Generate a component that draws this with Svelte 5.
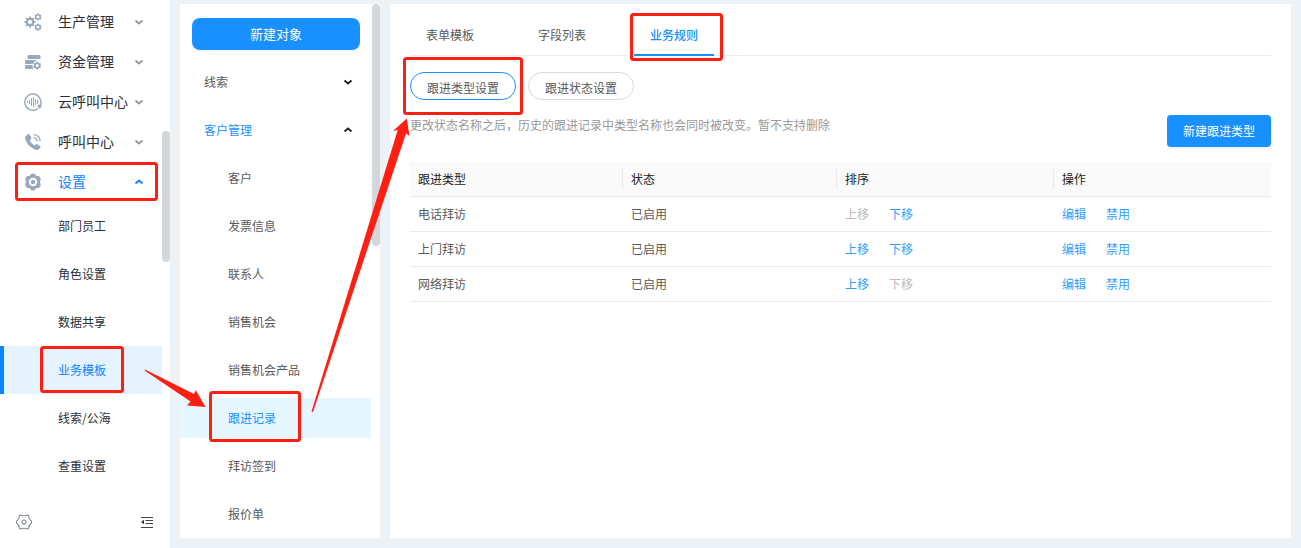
<script lang="ts">
  const mainMenu = [
    { name: '生产管理', icon: 'gears' },
    { name: '资金管理', icon: 'fund' },
    { name: '云呼叫中心', icon: 'cloud' },
    { name: '呼叫中心', icon: 'phone' },
    { name: '设置', icon: 'setting' },
  ];
  const settingMenu = ['部门员工', '角色设置', '数据共享', '业务模板', '线索/公海', '查重设置'];
  const objects = ['客户', '发票信息', '联系人', '销售机会', '销售机会产品', '跟进记录', '拜访签到', '报价单'];
  const tabs = ['表单模板', '字段列表', '业务规则'];
  const ruleTypes = ['跟进类型设置', '跟进状态设置'];

  let openMenu = $state('设置');
  let activeSetting = $state('业务模板');
  let activeObject = $state('跟进记录');
  let activeTab = $state('业务规则');
  let activeRule = $state('跟进类型设置');
  let rows = $state(['电话拜访', '上门拜访', '网络拜访']);

  function move(index: number, step: number) {
    const next = [...rows];
    [next[index], next[index + step]] = [next[index + step], next[index]];
    rows = next;
  }

  // closed gear outline, drawn round (cx, cy)
  function gear(cx: number, cy: number, r: number, teeth: number, depth: number) {
    const points: string[] = [];
    const step = (Math.PI * 2) / teeth;
    for (let i = 0; i < teeth; i++) {
      for (const [offset, radius] of [[-0.3, r - depth], [-0.2, r], [0.2, r], [0.3, r - depth]]) {
        const a = (i + offset) * step - Math.PI / 2;
        points.push(`${(cx + Math.cos(a) * radius).toFixed(2)} ${(cy + Math.sin(a) * radius).toFixed(2)}`);
      }
    }
    return `M${points.join('L')}Z`;
  }

  function ring(cx: number, cy: number, r: number) {
    return `M${cx - r} ${cy}a${r} ${r} 0 1 0 ${r * 2} 0a${r} ${r} 0 1 0 ${-r * 2} 0Z`;
  }
</script>

{#snippet chevron(up: boolean, bold: boolean)}
  <svg class="chevron" class:bold viewBox="0 0 10 10" width="10" height="10">
    <path d={up ? 'M1.5 6.5L5 3.5L8.5 6.5' : 'M1.5 3.5L5 6.5L8.5 3.5'} />
  </svg>
{/snippet}

{#snippet menuIcon(icon: string)}
  <svg class="menu-icon" viewBox="0 0 18 18" width="18" height="18" fill-rule="evenodd">
    {#if icon === 'gears'}
      <path d={gear(6, 9, 5.6, 8, 1.3) + ring(6, 9, 2.1)} />
      <path d={gear(14, 4, 3.6, 6, 0.6) + ring(14, 4, 1.4)} />
      <path d={gear(14, 14.2, 3.6, 6, 0.6) + ring(14, 14.2, 1.4)} />
    {:else if icon === 'fund'}
      <path d="M4.5 2h11a1 1 0 0 1 1 1v2a1 1 0 0 1-1 1h-11a1 1 0 0 1-1-1V3a1 1 0 0 1 1-1z" />
      <path d="M2 7h11.5Q10 8.2 9 11H2a1 1 0 0 1-1-1V8a1 1 0 0 1 1-1z" />
      <path d="M2 12h6.5q0 2.5 1 4H2a1 1 0 0 1-1-1v-2a1 1 0 0 1 1-1z" />
      <path d={gear(13.2, 12.6, 4, 6, 0.7) + ring(13.2, 12.6, 1.5)} />
    {:else if icon === 'cloud'}
      <path class="line" d="M13.8 15.6A8.1 8.1 0 1 1 16.6 11.6" />
      <path d="M14.2 11.8L17.4 11V14.2L15.2 15.4L13.6 13.8Z" />
      <path class="bars" d="M3.5 8v2M5.5 7v4M7.5 5v8M9.5 4v10M11.5 6v6M13.5 7v4" />
    {:else if icon === 'phone'}
      <path d="M2.2 2.5L4 1.2Q5 .8 5.7 1.8L7.3 4.5Q7.7 5.4 7 6.1L5.7 7.4Q7.4 10.8 10.5 12.5L12 11.3Q12.7 10.8 13.5 11.3L16 13Q17 13.8 16.3 14.8L15 16.3Q13.8 17.3 11.8 16.7C6.5 15 2.6 10.8 1.1 5.8Q.7 3.8 2.2 2.5Z" />
      <path class="line" d="M9.5 1.6Q15.8 2 16.2 8.3M9.5 4.6Q12.9 4.9 13.2 8.3" />
    {:else}
      <path d={'M7 1Q9 0 11 1L12.4 2.9L14.8 3Q16.6 4.2 16.8 6.4L15.9 9L16.8 11.6Q16.6 13.8 14.8 15L12.4 15.1L11 17Q9 18 7 17L5.6 15.1L3.2 15Q1.4 13.8 1.2 11.6L2.1 9L1.2 6.4Q1.4 4.2 3.2 3L5.6 2.9Z' + ring(9, 9, 4.2)} />
      <circle cx="9" cy="9" r="2.2" />
    {/if}
  </svg>
{/snippet}

<div class="layout">
  <aside class="sidebar">
    <nav class="main-menu">
      {#each mainMenu as item}
        <button
          class="menu-item"
          class:open={openMenu === item.name}
          onclick={() => (openMenu = item.name)}
        >
          {@render menuIcon(item.icon)}
          <span class="menu-name">{item.name}</span>
          {@render chevron(openMenu === item.name, false)}
        </button>
      {/each}
      {#each settingMenu as name}
        <button class="sub-item" class:active={activeSetting === name} onclick={() => (activeSetting = name)}>
          {name}
        </button>
      {/each}
    </nav>
    <div class="sidebar-footer">
      <button class="icon-button" aria-label="系统设置">
        <svg viewBox="0 0 16 16" width="16" height="16" fill="none" stroke="#858e99" stroke-width="1.1">
          <path d="M4.6 1Q8 2.6 11.4 1L12.6 1.7Q12.8 5.4 15.5 7.2V8.8Q12.8 10.6 12.6 14.3L11.4 15Q8 13.4 4.6 15L3.4 14.3Q3.2 10.6.5 8.8V7.2Q3.2 5.4 3.4 1.7Z" />
          <circle cx="8" cy="8" r="2" />
        </svg>
      </button>
      <button class="icon-button" aria-label="收起菜单">
        <svg viewBox="0 0 14 14" width="14" height="14">
          <path d="M1 2.5h12M5.5 5.5H13M5.5 8.5H13M1 12.5h12" stroke="#444" stroke-width="1.2" />
          <path d="M1 7L4 4.8V9.2Z" fill="#333" />
        </svg>
      </button>
    </div>
    <div class="scroll-thumb sidebar-thumb"></div>
  </aside>

  <section class="object-panel">
    <button class="create-object">新建对象</button>
    <nav class="object-list">
      <button class="group">线索 {@render chevron(false, true)}</button>
      <button class="group open">客户管理 {@render chevron(true, true)}</button>
      {#each objects as name}
        <button class="object" class:active={activeObject === name} onclick={() => (activeObject = name)}>
          {name}
        </button>
      {/each}
    </nav>
    <div class="scroll-thumb object-thumb"></div>
  </section>

  <main class="content">
    <div class="tabs" role="tablist">
      {#each tabs as tab}
        <button
          class="tab"
          role="tab"
          aria-selected={activeTab === tab}
          class:active={activeTab === tab}
          onclick={() => (activeTab = tab)}
        >{tab}</button>
      {/each}
    </div>

    <div class="rule-types">
      {#each ruleTypes as rule}
        <button class="pill" class:active={activeRule === rule} onclick={() => (activeRule = rule)}>{rule}</button>
      {/each}
    </div>

    <div class="toolbar">
      <p class="hint">更改状态名称之后，历史的跟进记录中类型名称也会同时被改变。暂不支持删除</p>
      <button class="create-type">新建跟进类型</button>
    </div>

    <table>
      <thead>
        <tr>
          <th>跟进类型</th>
          <th>状态</th>
          <th>排序</th>
          <th>操作</th>
        </tr>
      </thead>
      <tbody>
        {#each rows as row, i}
          <tr>
            <td>{row}</td>
            <td>已启用</td>
            <td>
              <div class="actions">
                <button class="link" disabled={i === 0} onclick={() => move(i, -1)}>上移</button>
                <button class="link" disabled={i === rows.length - 1} onclick={() => move(i, 1)}>下移</button>
              </div>
            </td>
            <td>
              <div class="actions">
                <button class="link">编辑</button>
                <button class="link">禁用</button>
              </div>
            </td>
          </tr>
        {/each}
      </tbody>
    </table>
  </main>

  <!-- guide marks: 设置 > 业务模板 > 跟进记录 > 跟进类型设置 -->
  <svg class="guide" viewBox="0 0 1301 548" width="1301" height="548" aria-hidden="true">
    <g fill="none" stroke="#ff1f12" stroke-width="3">
      <rect x="16.5" y="163.5" width="140" height="36" rx="2" />
      <rect x="41.5" y="347.5" width="81" height="44" rx="2" />
      <rect x="210.5" y="392.5" width="89" height="48" rx="2" />
      <rect x="404.5" y="58.5" width="117" height="55" rx="2" />
      <rect x="631.5" y="14.5" width="90" height="45" rx="2" />
    </g>
    <g fill="#ff1f12">
      <path d="M145 369.5L194 394L195.7 390L205.5 407L187 405.5L190.5 401.5L144.6 370.5Z" />
      <path d="M311.5 411.5L397.7 130L393 131L406.8 118.5L409.5 136L406 133.5L313 412Z" />
    </g>
  </svg>
</div>

<style>
:global(body) {
  margin: 0;
  background: #edf2f6;
}

.layout {
  position: relative;
  display: flex;
  gap: 10px;
  height: 100vh;
  overflow: hidden;
  font-family: "Noto Sans CJK SC", sans-serif;
  font-size: 12px;
  line-height: 20px;
  color: #5a5a5a;
}

button {
  margin: 0;
  padding: 0;
  border: none;
  background: none;
  font: inherit;
  color: inherit;
  cursor: pointer;
}

.sidebar {
  position: relative;
  display: flex;
  flex-direction: column;
  flex: 0 0 170px;
  background: #fff;
  color: #2b2f36;
}

.main-menu {
  display: flex;
  flex-direction: column;
  flex: 1;
  min-height: 0;
  padding-top: 2px;
  margin-right: 8px;
  overflow: hidden;
}

.menu-item {
  display: flex;
  align-items: center;
  flex: 0 0 40px;
  padding: 0 18px 0 24px;
  font-size: 14px;
  text-align: left;
  white-space: nowrap;
}

.menu-icon {
  flex: none;
  margin-right: 16px;
  fill: #98a9bd;
}

.menu-icon .line {
  fill: none;
  stroke: #98a9bd;
  stroke-width: 1.4;
}

.menu-icon .bars {
  fill: none;
  stroke: #98a9bd;
  stroke-width: 1;
}

.menu-name {
  flex: 1;
  padding-bottom: 2px;
}

.chevron {
  flex: none;
  fill: none;
  stroke: #919ba6;
  stroke-width: 1.8;
}

.chevron.bold {
  stroke: #222;
  stroke-width: 2;
}

.menu-item.open {
  color: #0a84ff;
}

.menu-item.open .chevron {
  stroke: #0a84ff;
  stroke-width: 2;
}

.sub-item {
  flex: 0 0 48px;
  padding-left: 54px;
  border-left: 4px solid transparent;
  text-align: left;
}

.sub-item.active {
  border-left-color: #0a84ff;
  background: #e5f2ff;
  color: #0a84ff;
}

.sidebar-footer {
  display: flex;
  align-items: center;
  justify-content: space-between;
  flex: 0 0 52px;
  padding: 0 16px;
}

.icon-button {
  display: flex;
}

.scroll-thumb {
  position: absolute;
  right: 0;
  width: 8px;
  border-radius: 4px;
  background: #d3d7da;
}

.sidebar-thumb {
  top: 131px;
  height: 131px;
}

.object-thumb {
  top: 0;
  height: 242px;
}

.object-panel {
  position: relative;
  display: flex;
  flex-direction: column;
  flex: 0 0 200px;
  margin: 4px 0 10px;
  background: #fff;
  overflow: hidden;
}

.create-object {
  flex: 0 0 32px;
  margin: 14px 20px 12px 12px;
  border-radius: 8px;
  background: #1890ff;
  box-shadow: 0 2px 0 rgba(0, 0, 0, 0.04);
  color: #fff;
  font-size: 13px;
}

.object-list {
  display: flex;
  flex-direction: column;
  gap: 8px;
  margin-right: 9px;
}

.group {
  display: flex;
  align-items: center;
  justify-content: space-between;
  flex: 0 0 40px;
  padding: 0 18px 0 24px;
}

.object {
  flex: 0 0 40px;
  padding-left: 48px;
  text-align: left;
}

.group.open {
  color: #1890ff;
}

.object.active {
  background: #e6f7ff;
  color: #1890ff;
}

.content {
  flex: 1;
  min-width: 0;
  margin: 4px 10px 10px 0;
  padding: 0 20px;
  background: #fff;
}

.tabs {
  display: flex;
  gap: 32px;
  border-bottom: 1px solid #ebedf0;
}

.tab {
  height: 52px;
  margin-bottom: -1px;
  padding: 12px 16px 0;
  border-bottom: 2px solid transparent;
}

.tab.active {
  border-bottom-color: #1890ff;
  color: #1890ff;
  font-weight: 500;
}

.rule-types {
  display: flex;
  gap: 12px;
  padding-top: 16px;
}

.pill {
  height: 28px;
  padding: 4px 16px 0;
  border: 1px solid #d9d9d9;
  border-radius: 14px;
}

.pill.active {
  border-color: #1890ff;
}

.toolbar {
  display: flex;
  justify-content: space-between;
  padding: 15px 0;
}

.hint {
  margin: 0;
  color: #999;
}

.create-type {
  height: 32px;
  padding: 0 16px;
  border-radius: 4px;
  background: #1890ff;
  box-shadow: 0 2px 0 rgba(0, 0, 0, 0.04);
  color: #fff;
}

table {
  width: 100%;
  table-layout: fixed;
  border-collapse: separate;
  border-spacing: 0;
}

th,
td {
  height: 34px;
  padding: 0 8px;
  border-bottom: 1px solid #e8eaec;
  text-align: left;
}

th {
  background: linear-gradient(#e8e8e8, #e8e8e8) right center / 1px 20px no-repeat #fafafa;
  color: #222;
  font-weight: 400;
}

th:first-child {
  width: 197px;
}

th:nth-child(2) {
  width: 198px;
}

th:last-child {
  background: #fafafa;
}

.actions {
  display: flex;
  gap: 20px;
}

.link {
  color: #339dff;
}

.link:disabled {
  color: #bbb;
  cursor: default;
}

.guide {
  position: absolute;
  top: 0;
  left: 0;
  pointer-events: none;
}
</style>
